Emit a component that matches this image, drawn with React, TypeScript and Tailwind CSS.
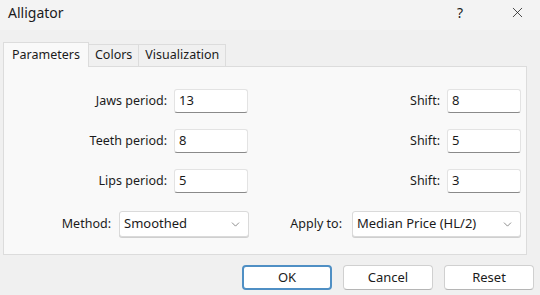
import { ChevronDown, X } from "lucide-react";

const font = { fontFamily: '"Noto Sans", "Liberation Sans", sans-serif' };

function Field({ label, value, labelW }: { label: string; value: string; labelW: string }) {
  return (
    <div className="flex items-center">
      <span className={`${labelW} text-right pr-[7px] text-[12.5px] text-[#1b1b1b]`}>{label}</span>
      <div className="w-[74px] h-[24px] bg-white border border-[#e3e3e3] border-b-[#8a8a8a] rounded-[3px] flex items-center pl-[4px] text-[13px] text-[#1b1b1b]">
        {value}
      </div>
    </div>
  );
}

function Select({ value, w }: { value: string; w: string }) {
  return (
    <div className={`${w} h-[26px] bg-white border border-[#dadada] rounded-[3px] flex items-center justify-between pl-[4px] pr-[6px] text-[13px] text-[#1b1b1b] shadow-[0_1px_0_#cfcfcf]`}>
      <span>{value}</span>
      <ChevronDown size={13} strokeWidth={1.3} className="text-[#606060]" />
    </div>
  );
}

export default function App() {
  return (
    <div style={font} className="w-[540px] h-[295px] bg-[#f0f0f0] overflow-hidden flex flex-col">
      {/* Title bar */}
      <div className="h-[30px] bg-[#f3f3f3] flex items-center justify-between pl-[8px]">
        <span className="text-[14px] text-[#1b1b1b] mt-[-6px]">Alligator</span>
        <div className="flex items-center mt-[-6px]">
          <span className="text-[14px] text-[#1b1b1b] w-[46px] mr-[11px] text-center">?</span>
          <div className="w-[46px] flex justify-center">
            <X size={17} strokeWidth={1.1} className="text-[#1b1b1b]" />
          </div>
        </div>
      </div>

      {/* Tabs */}
      <div className="flex items-end pl-[3px] mt-[12px] h-[24px]">
        <div className="h-[25px] px-[8px] bg-[#f9f9f9] border border-[#dcdcdc] border-b-0 flex items-center text-[12.5px] text-[#1b1b1b] relative z-10 mb-[-1px]">
          Parameters
        </div>
        <div className="h-[22px] px-[6px] border-t border-r border-[#dcdcdc] bg-[#f0f0f0] flex items-center text-[12.5px] text-[#1b1b1b]">
          Colors
        </div>
        <div className="h-[22px] px-[6px] border-t border-r border-[#dcdcdc] bg-[#f0f0f0] flex items-center text-[12.5px] text-[#1b1b1b]">
          Visualization
        </div>
      </div>

      {/* Panel */}
      <div className="mx-[3px] w-[524px] h-[189px] bg-[#f9f9f9] border border-[#dcdcdc] flex flex-col pt-[22px] gap-[16px]">
        <div className="flex justify-between pr-[5px]">
          <Field label="Jaws period:" value="13" labelW="w-[170px]" />
          <Field label="Shift:" value="8" labelW="w-[80px]" />
        </div>
        <div className="flex justify-between pr-[5px]">
          <Field label="Teeth period:" value="8" labelW="w-[170px]" />
          <Field label="Shift:" value="5" labelW="w-[80px]" />
        </div>
        <div className="flex justify-between pr-[5px]">
          <Field label="Lips period:" value="5" labelW="w-[170px]" />
          <Field label="Shift:" value="3" labelW="w-[80px]" />
        </div>
        <div className="flex justify-between pr-[5px] mt-[2px]">
          <div className="flex items-center">
            <span className="w-[115px] text-right pr-[8px] text-[12.5px] text-[#1b1b1b]">Method:</span>
            <Select value="Smoothed" w="w-[130px]" />
          </div>
          <div className="flex items-center">
            <span className="text-[12.5px] text-[#1b1b1b] pr-[10px]">Apply to:</span>
            <Select value="Median Price (HL/2)" w="w-[169px]" />
          </div>
        </div>
      </div>

      {/* Buttons */}
      <div className="flex justify-end gap-[11px] pr-[6px] mt-[10px]">
        <button className="w-[90px] h-[25px] bg-white border-2 border-[#4f8fc4] rounded-[4px] text-[13px] text-[#1b1b1b]">
          OK
        </button>
        <button className="w-[90px] h-[25px] bg-white border border-[#d0d0d0] border-b-[#b5b5b5] rounded-[4px] text-[13px] text-[#1b1b1b]">
          Cancel
        </button>
        <button className="w-[90px] h-[25px] bg-white border border-[#d0d0d0] border-b-[#b5b5b5] rounded-[4px] text-[13px] text-[#1b1b1b]">
          Reset
        </button>
      </div>
    </div>
  );
}
